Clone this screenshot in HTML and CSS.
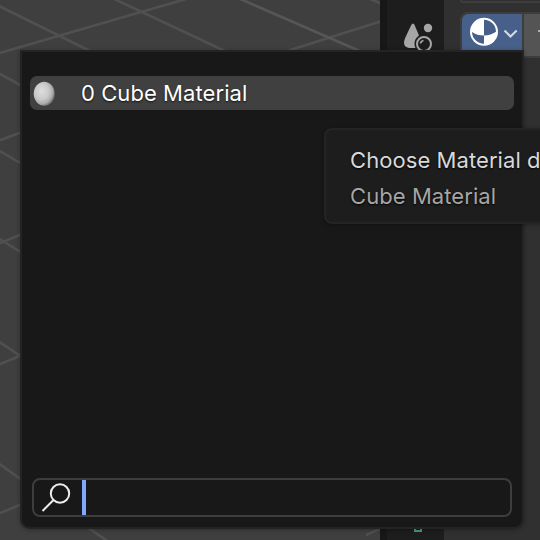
FILE: index.html
```
<!DOCTYPE html>
<html lang="en">
<head>
<meta charset="utf-8">
<title>Material</title>
<link rel="stylesheet" href="styles.css">
</head>
<body>
<div class="app">
  <main class="workspace">
    <section class="viewport">
      <svg width="380" height="540" viewBox="0 0 380 540" fill="none" stroke="#505050" stroke-width="2.6">
        <path d="M-2 5.5L92 52M-2 53.5L186 -1M112 -2L227 52M284 52L382 21M368 -2L382 4M-2 73L22 86M-2 141L22 132M-2 150L22 164M-2 244L22 234M-2 238L22 253M-2 341L22 357M-2 365L22 355M-2 463L22 480M-2 514L22 504M87 527L109 542M366 535L382 528"/>
        <path stroke="#565656" d="M238 -2L362 52"/>
      </svg>
    </section>
    <nav class="tabs">
      <svg class="scene-icon" width="34" height="34" viewBox="0 0 34 34">
        <path fill="#a6a6a6" d="M13 3.500Q14.300 3.500 15.200 6.500L19 15.500Q14.500 18.500 14.500 23.500Q14.500 26 15.500 28H9Q4 27 4 22.500Q4 20 7 14L11 5.500Q12 3.500 13 3.500Z"/>
        <circle cx="28" cy="8" r="4.200" fill="#a6a6a6"/>
        <circle cx="24" cy="24" r="7" fill="none" stroke="#a6a6a6" stroke-width="2"/>
        <path d="M20.500 23.500Q20.800 20.800 23.500 20.500" fill="none" stroke="#a6a6a6" stroke-width="1.700"/>
      </svg>
      <svg class="data-icon" width="8" height="8" viewBox="0 0 8 8"><rect x="1" y="1" width="6" height="6" fill="none" stroke="#409f80" stroke-width="2"/></svg>
    </nav>
    <section class="properties">
      <div class="field-end"></div>
      <div class="selector">
        <div class="browse">
          <svg width="60" height="40" viewBox="0 0 60 40">
            <circle cx="22" cy="17.800" r="14" fill="#fff"/>
            <path fill="#476089" d="M22 5.800A12 12 0 0 1 34 17.800Q29 21.500 22 21.500ZM22 21.500V29.800A12 12 0 0 1 10 18Q15 21.500 22 21.500Z"/>
            <path d="M42.500 16.500L48.500 22.500L54.700 16.500" fill="none" stroke="#d5d8de" stroke-width="2.200"/>
          </svg>
        </div>
        <div class="name-field"><svg width="6" height="6"><path d="M1 4H6M4 1V6" stroke="#ccc" stroke-width="1.500"/></svg></div>
      </div>
    </section>
  </main>
  <section class="popup">
    <div class="item">
      <svg width="24" height="26" viewBox="0 0 24 26">
        <defs><radialGradient id="clay" cx="38%" cy="40%" r="62%"><stop offset="0" stop-color="#dedede"/><stop offset=".55" stop-color="#c9c9c9"/><stop offset=".85" stop-color="#aaa"/><stop offset="1" stop-color="#777"/></radialGradient></defs>
        <ellipse cx="12.200" cy="13.800" rx="10.500" ry="12" fill="url(#clay)"/>
      </svg>
      <span>0 Cube Material</span>
    </div>
    <div class="search">
      <svg width="32" height="32" viewBox="0 0 32 32" fill="none" stroke="#ededed" stroke-width="2"><circle cx="19" cy="11.500" r="9.200"/><path d="M12.500 18L1.500 29"/></svg>
      <i class="caret"></i>
    </div>
  </section>
  <aside class="tooltip">
    <p>Choose Material data-block</p>
    <p class="value">Cube Material</p>
  </aside>
</div>
</body>
</html>
```
FILE: styles.css
```
* { box-sizing: border-box; }
body { margin: 0; overflow: hidden; background: #303030; font-family: Inter, "Liberation Sans", sans-serif; font-size: 22px; letter-spacing: .07px; }
.app { position: relative; width: 540px; height: 540px; overflow: hidden; }
svg { display: block; flex: none; }
.workspace { display: grid; grid-template-columns: 380px 64px 96px; height: 540px; }
.viewport { background: #3f3f3f; }
.tabs { display: flex; flex-direction: column; justify-content: space-between; border-left: 7px solid #171717; background: #1d1d1d; padding: 20px 0 8px 13px; }
.data-icon { margin-left: 14px; }
.properties { background: #303030; padding-left: 16px; }
.field-end { height: 3px; width: 100px; border: 2px solid #3d3d3d; border-top: 0; border-radius: 0 0 0 6px; }
.selector { display: flex; margin-top: 9px; width: 100px; height: 46px; border: 2px solid #3d3d3d; border-radius: 8px; overflow: hidden; }
.browse { width: 60px; flex: none; background: #476089; }
.name-field { flex: 1; border-left: 2px solid #3d3d3d; background: #545454; padding: 13px 0 0 13px; }
.popup { position: absolute; left: 20px; top: 50px; width: 504px; height: 479px; display: flex; flex-direction: column; justify-content: space-between; padding: 24px 8px 10px; border: 2px solid #242424; border-radius: 0 0 10px 10px; background: #181818; box-shadow: 0 1px 4px rgba(0,0,0,.3); }
.item { display: flex; align-items: center; height: 34px; padding-left: 2px; border-radius: 7px; background: #404040; color: #fff; text-shadow: 0 1px 2px rgba(0,0,0,.7); }
.item span { margin-left: 25px; white-space: nowrap; }
.search { display: flex; align-items: center; height: 39px; margin: 0 2px; padding-left: 7px; border: 2px solid #3d3d3d; border-radius: 8px; }
.caret { width: 4px; height: 35px; margin-left: 9px; background: #80a8ff; }
.tooltip { position: absolute; left: 324px; top: 128px; width: 330px; height: 96px; padding: 12px 24px; border: 2px solid #242424; border-radius: 8px; background: #1d1d1d; color: #d9d9d9; box-shadow: 0 1px 4px rgba(0,0,0,.3); }
.tooltip p { margin: 0; line-height: 36px; white-space: nowrap; text-shadow: 0 1px 2px #000; }
.tooltip .value { color: #a6a6a6; }
```
